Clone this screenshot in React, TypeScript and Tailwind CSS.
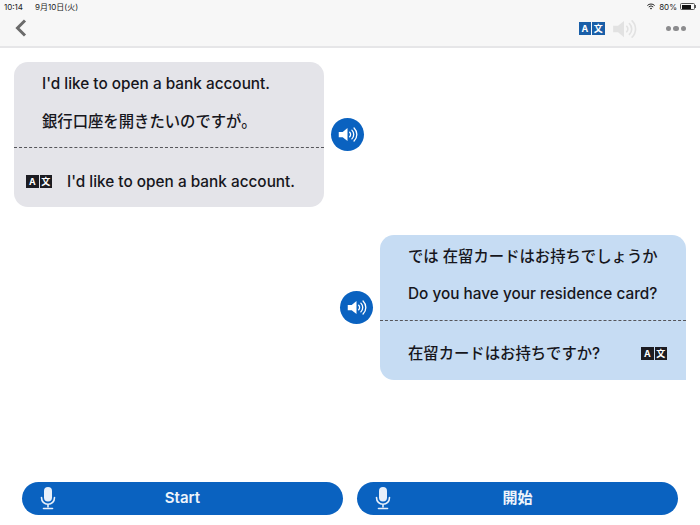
function TranslateIcon({ color }: { color: string }) {
  return (
    <div className="flex gap-[1px]">
      <div className={`flex h-[13px] w-[12.5px] items-center justify-center ${color} font-['Inter',sans-serif] text-[9px] leading-none font-bold text-white`}>
        A
      </div>
      <div className={`flex h-[13px] w-[12.5px] items-center justify-center ${color} font-['Noto_Sans_CJK_JP',sans-serif] text-[9px] leading-none font-bold text-white`}>
        文
      </div>
    </div>
  )
}

function SpeakerIcon({ className, fill }: { className: string; fill: string }) {
  return (
    <svg viewBox="0 0 24 24" className={className} fill="none">
      <path d="M2 9h4.5L12 4.5v15L6.5 15H2z" fill={fill} />
      <path d="M14.5 9.5a3.5 3.5 0 0 1 0 5" stroke={fill} strokeWidth="1.5" strokeLinecap="round" />
      <path d="M17 7a7 7 0 0 1 0 10" stroke={fill} strokeWidth="1.5" strokeLinecap="round" />
      <path d="M19.5 4.5a10.5 10.5 0 0 1 0 15" stroke={fill} strokeWidth="1.5" strokeLinecap="round" />
    </svg>
  )
}

function SpeakerButton() {
  return (
    <div className="flex h-[33px] w-[33px] shrink-0 items-center justify-center rounded-full bg-[#0a62c0]">
      <SpeakerIcon className="h-[21px] w-[21px]" fill="#ffffff" />
    </div>
  )
}

function MicIcon() {
  return (
    <svg viewBox="0 0 16 24" className="h-[24px] w-[16px]" fill="none">
      <rect x="4" y="1" width="8" height="14.5" rx="4" fill="#e8f0fa" />
      <path d="M1.5 11.5c0 4 2.8 6.8 6.5 6.8s6.5-2.8 6.5-6.8" stroke="#e8f0fa" strokeWidth="1.6" strokeLinecap="round" />
      <path d="M8 18.5v3" stroke="#e8f0fa" strokeWidth="1.6" />
      <path d="M3.5 22.5h9" stroke="#e8f0fa" strokeWidth="1.6" strokeLinecap="round" />
    </svg>
  )
}

function StartButton({ label }: { label: string }) {
  return (
    <div className="relative flex h-[33px] flex-1 items-center justify-center rounded-full bg-[#0a62c0] text-[15px] font-semibold text-[#eef4fb]">
      <div className="absolute left-[18px] top-[4px]">
        <MicIcon />
      </div>
      {label}
    </div>
  )
}

export default function App() {
  return (
    <div className="flex h-[525px] w-[700px] flex-col overflow-hidden bg-white font-['Inter','Noto_Sans_CJK_JP',sans-serif] text-[#16161c]">
      {/* status bar + nav */}
      <header className="h-[48px] shrink-0 border-b-2 border-[#e6e6e8] bg-[#f7f7f7]">
        <div className="flex h-[13px] items-center justify-between pl-[4px] pr-[4px] text-[8px] text-[#222]">
          <div className="flex gap-[12px]">
            <span>10:14</span>
            <span>9月10日(火)</span>
          </div>
          <div className="flex items-center gap-[3px]">
            <svg viewBox="0 0 12 10" className="h-[7px] w-[10px]" fill="none">
              <path d="M0.8 3.6a7.4 7.4 0 0 1 10.4 0" stroke="#222" strokeWidth="1.4" />
              <path d="M2.8 5.7a4.5 4.5 0 0 1 6.4 0" stroke="#222" strokeWidth="1.4" />
              <path d="M4.4 7.6 6 9.3l1.6-1.7a2.3 2.3 0 0 0-3.2 0z" fill="#222" />
            </svg>
            <span>80%</span>
            <div className="flex items-center">
              <div className="h-[7px] w-[15px] rounded-[1.5px] border border-[#555] p-[0.5px]">
                <div className="h-full w-[80%] bg-[#111]" />
              </div>
              <div className="h-[3px] w-[1px] bg-[#555]" />
            </div>
          </div>
        </div>
        <div className="flex h-[31px] items-center justify-between pl-[15px] pr-[14px]">
          <svg viewBox="0 0 12 18" className="mt-[-1px] h-[18px] w-[12px]" fill="none">
            <path d="M10 1.5 2.5 9l7.5 7.5" stroke="#6b6b6b" strokeWidth="3" />
          </svg>
          <div className="flex items-center">
            <TranslateIcon color="bg-[#1a5fa8]" />
            <SpeakerIcon className="ml-[6px] h-[26px] w-[26px]" fill="#e2e2e2" />
            <div className="ml-[29px] flex gap-[2px]">
              <div className="h-[5.5px] w-[5.5px] rounded-full bg-[#8c8c8e]" />
              <div className="h-[5.5px] w-[5.5px] rounded-full bg-[#8c8c8e]" />
              <div className="h-[5.5px] w-[5.5px] rounded-full bg-[#8c8c8e]" />
            </div>
          </div>
        </div>
      </header>

      {/* conversation */}
      <main className="flex flex-1 flex-col gap-[28px] pt-[14px] text-[15.35px] font-medium">
        <div className="flex items-center gap-[7px] pl-[14px]">
          <div className="flex h-[145px] w-[310px] flex-col rounded-[14px] bg-[#e4e4e9]">
            <div className="flex h-[86px] flex-col gap-[17px] border-b border-dashed border-[#55555a] pl-[28px] pt-[11px]">
              <p className="leading-[21px]">I'd like to open a bank account.</p>
              <p className="leading-[21px]">銀行口座を開きたいのですが。</p>
            </div>
            <div className="flex flex-1 items-center gap-[15px] pl-[12px] pt-[8px]">
              <TranslateIcon color="bg-[#1c1c22]" />
              <p>I'd like to open a bank account.</p>
            </div>
          </div>
          <SpeakerButton />
        </div>

        <div className="flex items-center justify-end gap-[7px] pr-[14px]">
          <SpeakerButton />
          <div className="flex h-[145px] w-[306px] flex-col rounded-l-[14px] rounded-tr-[14px] bg-[#c6dcf3]">
            <div className="flex h-[86px] flex-col gap-[16px] border-b border-dashed border-[#55555a] pl-[28px] pt-[11px]">
              <p className="leading-[21px]">では 在留カードはお持ちでしょうか</p>
              <p className="leading-[21px]">Do you have your residence card?</p>
            </div>
            <div className="flex flex-1 items-center justify-between pl-[28px] pr-[19px] pt-[6px]">
              <p>在留カードはお持ちですか?</p>
              <TranslateIcon color="bg-[#1c1c22]" />
            </div>
          </div>
        </div>
      </main>

      {/* record buttons */}
      <footer className="flex shrink-0 gap-[14px] px-[22px] pb-[10px]">
        <StartButton label="Start" />
        <StartButton label="開始" />
      </footer>
    </div>
  )
}
